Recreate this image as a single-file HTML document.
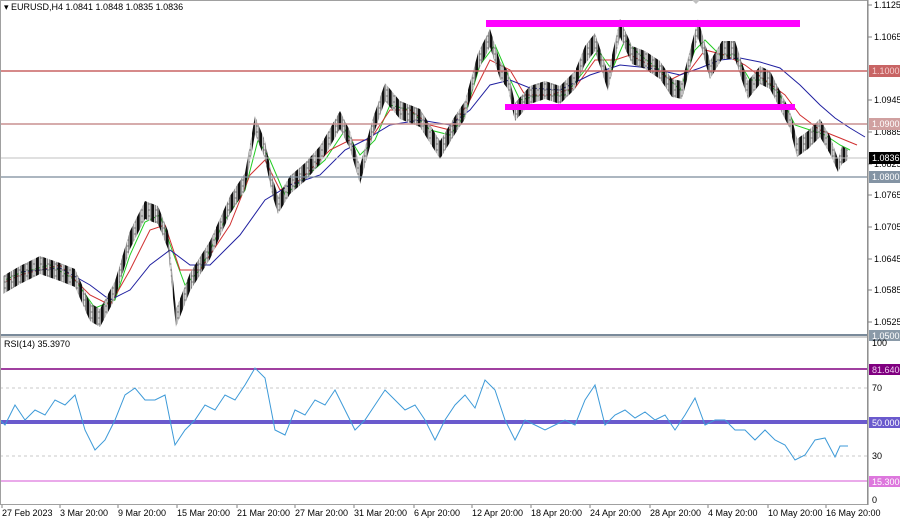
<!DOCTYPE html>
<html><head><meta charset="utf-8"><style>
body{margin:0;background:#fff;width:900px;height:520px;overflow:hidden}
svg{display:block}
text{font-size:9px;fill:#000;font-family:"Liberation Sans",sans-serif}
</style></head><body>
<svg width="900" height="520" xmlns="http://www.w3.org/2000/svg">
<defs>
<pattern id="cd" patternUnits="userSpaceOnUse" width="7.2" height="6">
<rect x="0" y="0" width="3" height="6" fill="#111"/>
<rect x="4.1" y="0" width="2.2" height="6" fill="#e8e8e8" stroke="#555" stroke-width="0.7"/>
</pattern>
</defs>
<rect x="0" y="0" width="900" height="520" fill="#fff"/>
<polyline fill="none" stroke="#22cc22" stroke-width="1" points="5,280 20,273 50,265 75,280 95,308 115,300 130,255 145,222 160,215 172,250 185,285 200,270 225,220 245,190 258,140 270,160 285,195 300,182 325,160 345,130 360,155 375,140 390,105 410,110 430,130 450,135 465,115 480,65 495,45 508,75 520,100 540,95 565,95 585,70 598,50 612,70 625,40 640,55 660,70 680,90 695,50 705,40 720,55 735,55 750,80 765,80 780,95 795,125 810,130 825,135 840,145 850,150"/>
<polyline fill="none" stroke="#d03030" stroke-width="1" points="5,282 20,275 60,265 90,295 110,305 130,270 150,230 165,225 180,270 200,270 230,225 250,175 265,160 280,190 300,180 330,150 350,140 370,140 390,110 410,110 430,125 450,130 470,100 490,60 510,70 525,95 550,95 575,88 595,60 615,60 630,55 650,65 670,80 690,70 705,50 725,55 745,65 765,80 785,95 800,115 820,130 840,138 857,145"/>
<polyline fill="none" stroke="#2020a0" stroke-width="1" points="20,272 60,268 90,285 110,300 130,290 150,265 170,250 190,265 210,265 240,235 265,200 290,185 320,175 345,150 365,140 390,125 420,120 450,125 470,110 490,85 510,80 530,88 560,90 590,75 620,65 650,68 680,75 700,68 720,60 740,58 760,62 780,68 800,85 820,105 835,118 850,128 865,137"/>
<polygon fill="url(#cd)" points="3,276 20,266 40,256 60,263 75,269 90,303 100,309 115,281 130,231 145,201 158,206 168,231 176,309 190,273 210,241 230,196 245,173 255,116 265,141 272,176 278,196 290,176 305,163 320,146 340,111 350,131 360,166 372,121 385,83 400,101 420,109 440,141 455,116 465,101 478,53 490,29 500,61 508,71 515,103 530,86 545,81 560,86 575,71 585,46 595,33 608,73 620,19 632,46 645,51 660,61 672,79 682,81 698,19 710,61 722,41 735,41 748,81 760,66 770,71 780,91 790,111 797,139 808,131 820,119 830,136 838,159 842,146 848,150 848,160 842,164 838,172 830,154 820,137 808,149 797,157 790,129 780,109 770,89 760,84 748,99 735,59 722,59 710,79 698,37 682,99 672,97 660,79 645,69 632,64 620,37 608,91 595,51 585,64 575,89 560,104 545,99 530,104 515,121 508,89 500,79 490,47 478,71 465,119 455,134 440,159 420,127 400,119 385,101 372,139 360,184 350,149 340,129 320,164 305,181 290,194 278,214 272,194 265,159 255,134 245,191 230,214 210,259 190,291 176,327 168,249 158,224 145,219 130,249 115,299 100,327 90,321 75,287 60,281 40,274 20,284 3,294"/>
<rect x="486" y="20" width="314" height="7" fill="#ff00ff"/>
<rect x="505" y="104" width="290" height="6" fill="#ff00ff"/>
<line x1="0" y1="71" x2="868" y2="71" stroke="#c86464" stroke-width="1.5"/>
<line x1="0" y1="124" x2="868" y2="124" stroke="#c89090" stroke-width="1.5"/>
<line x1="0" y1="158" x2="868" y2="158" stroke="#c0c0c0" stroke-width="1"/>
<line x1="0" y1="177" x2="868" y2="177" stroke="#7a8a9a" stroke-width="1.2"/>
<line x1="0" y1="335" x2="868" y2="335" stroke="#7a8a9a" stroke-width="2"/>
<line x1="0" y1="369" x2="868" y2="369" stroke="#800080" stroke-width="1.5"/>
<line x1="0" y1="388" x2="868" y2="388" stroke="#c8c8c8" stroke-dasharray="3,3"/>
<line x1="0" y1="422" x2="868" y2="422" stroke="#6a5acd" stroke-width="4"/>
<line x1="0" y1="456" x2="868" y2="456" stroke="#c8c8c8" stroke-dasharray="3,3"/>
<line x1="0" y1="481" x2="868" y2="481" stroke="#dd77dd" stroke-width="1.2"/>
<polyline fill="none" stroke="#3d9ad8" stroke-width="1" points="0,420 5,425 15,405 25,420 35,410 45,415 55,400 65,405 75,395 85,430 95,450 105,440 115,420 125,395 135,388 145,400 155,400 165,395 175,445 185,430 195,420 205,405 215,410 225,395 235,400 245,385 255,368 265,378 275,430 285,435 295,410 305,415 315,400 325,405 335,390 345,410 355,430 365,420 375,405 385,390 395,400 405,410 415,405 425,420 435,440 445,420 455,405 465,395 475,408 485,380 495,390 505,420 515,440 525,420 535,425 545,430 555,425 565,420 575,425 585,400 595,385 605,425 615,415 625,410 635,418 645,412 655,420 665,415 675,430 685,415 695,398 705,425 715,420 725,420 735,430 745,430 755,440 765,430 775,440 785,445 795,460 805,455 815,440 825,438 835,457 840,446 848,446"/>
<rect x="0.5" y="0.5" width="867" height="504" fill="none" stroke="#a0a0a0"/>
<line x1="0" y1="337" x2="868" y2="337" stroke="#a0a0a0"/>
<line x1="868" y1="0" x2="868" y2="505" stroke="#808080"/>
<text x="4" y="10">▾ EURUSD,H4  1.0841 1.0848 1.0835 1.0836</text>
<text x="4" y="347">RSI(14) 35.3970</text>
<polygon points="692,0 700,0 696,4" fill="#c0c0c0"/>
<g stroke="#808080">
<line x1="868" y1="5" x2="872" y2="5"/><line x1="868" y1="37" x2="872" y2="37"/><line x1="868" y1="100" x2="872" y2="100"/><line x1="868" y1="132" x2="872" y2="132"/><line x1="868" y1="164" x2="872" y2="164"/><line x1="868" y1="195" x2="872" y2="195"/><line x1="868" y1="227" x2="872" y2="227"/><line x1="868" y1="259" x2="872" y2="259"/><line x1="868" y1="290" x2="872" y2="290"/><line x1="868" y1="322" x2="872" y2="322"/>
</g>
<text x="874" y="8">1.1125</text><text x="874" y="40">1.1065</text><text x="874" y="103">1.0945</text><text x="874" y="135">1.0885</text><text x="874" y="167">1.0825</text><text x="874" y="198">1.0765</text><text x="874" y="230">1.0705</text><text x="874" y="262">1.0645</text><text x="874" y="293">1.0585</text><text x="874" y="325">1.0525</text>
<rect x="869" y="65" width="31" height="12" fill="#c86464"/><text x="872" y="74" style="fill:#f4d0d0">1.1000</text>
<rect x="869" y="118" width="31" height="12" fill="#d0a0a0"/><text x="872" y="127" style="fill:#fff">1.0900</text>
<rect x="869" y="152" width="31" height="12" fill="#000"/><text x="872" y="161" style="fill:#fff">1.0836</text>
<rect x="869" y="171" width="31" height="12" fill="#8494a4"/><text x="872" y="180" style="fill:#fff">1.0800</text>
<rect x="869" y="330" width="31" height="11" fill="#8a9aa8"/><text x="872" y="339" style="fill:#fff">1.0500</text>
<text x="872" y="346">100</text>
<rect x="869" y="364" width="31" height="11" fill="#800080"/><text x="872" y="373" style="fill:#f0d0f0">81.6400</text>
<text x="872" y="391">70</text>
<rect x="869" y="417" width="31" height="11" fill="#6a5acd"/><text x="872" y="426" style="fill:#fff">50.0000</text>
<text x="872" y="459">30</text>
<rect x="869" y="476" width="31" height="11" fill="#dd77dd"/><text x="872" y="485" style="fill:#fff">15.3000</text>
<text x="872" y="503">0</text>
<g stroke="#808080">
<line x1="2" y1="505" x2="2" y2="508"/><line x1="60" y1="505" x2="60" y2="508"/><line x1="118" y1="505" x2="118" y2="508"/><line x1="177" y1="505" x2="177" y2="508"/><line x1="237" y1="505" x2="237" y2="508"/><line x1="295" y1="505" x2="295" y2="508"/><line x1="354" y1="505" x2="354" y2="508"/><line x1="414" y1="505" x2="414" y2="508"/><line x1="472" y1="505" x2="472" y2="508"/><line x1="531" y1="505" x2="531" y2="508"/><line x1="590" y1="505" x2="590" y2="508"/><line x1="650" y1="505" x2="650" y2="508"/><line x1="708" y1="505" x2="708" y2="508"/><line x1="768" y1="505" x2="768" y2="508"/><line x1="826" y1="505" x2="826" y2="508"/>
</g>
<text x="2" y="516">27 Feb 2023</text><text x="60" y="516">3 Mar 20:00</text><text x="118" y="516">9 Mar 20:00</text><text x="177" y="516">15 Mar 20:00</text><text x="237" y="516">21 Mar 20:00</text><text x="295" y="516">27 Mar 20:00</text><text x="354" y="516">31 Mar 20:00</text><text x="414" y="516">6 Apr 20:00</text><text x="472" y="516">12 Apr 20:00</text><text x="531" y="516">18 Apr 20:00</text><text x="590" y="516">24 Apr 20:00</text><text x="650" y="516">28 Apr 20:00</text><text x="708" y="516">4 May 20:00</text><text x="768" y="516">10 May 20:00</text><text x="826" y="516">16 May 20:00</text>
</svg>
</body></html>
